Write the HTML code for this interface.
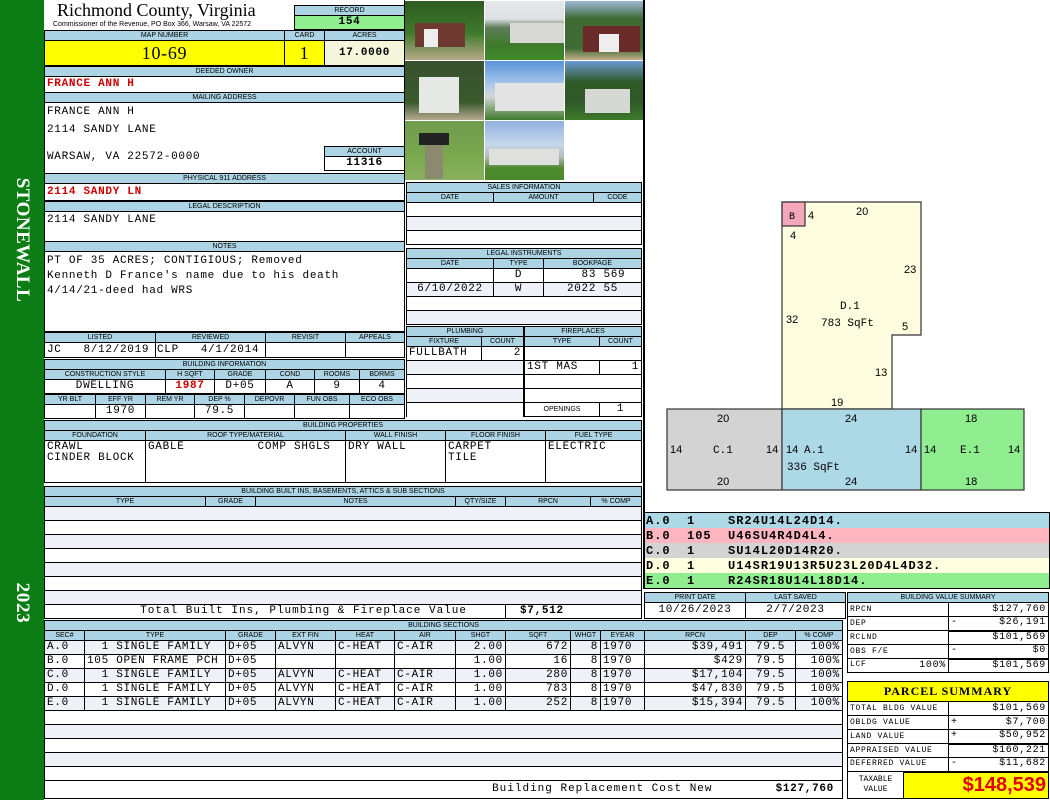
<!DOCTYPE html>
<html><head><meta charset="utf-8"><style>
*{margin:0;padding:0;box-sizing:border-box}
body{width:1050px;height:800px;position:relative;background:#fff;overflow:hidden;font-family:"Liberation Mono",monospace;font-size:11px;letter-spacing:0.7px;color:#000}
.a{position:absolute}
table{position:absolute;border-collapse:collapse;table-layout:fixed}
td{border:1px solid #000;padding:0 2px;white-space:nowrap;overflow:hidden;line-height:1}
.h td,td.h{background:#acd4e4;font-family:"Liberation Sans",sans-serif;font-size:7px;letter-spacing:0;text-align:center;height:10px}
.alt td{background:#eef1f7}
.r{text-align:right}.c{text-align:center}
.red{color:#d00000;font-weight:bold}
.ph{position:absolute;overflow:hidden}
</style></head><body>
<div class="a" style="left:0;top:0;width:44px;height:800px;background:#0b7d14"></div>
<div class="a" style="left:22px;top:240px;transform:translate(-50%,-50%) rotate(90deg);color:#fff;font:bold 19px 'Liberation Serif',serif;white-space:nowrap;letter-spacing:0.5px">STONEWALL</div>
<div class="a" style="left:22px;top:603px;transform:translate(-50%,-50%) rotate(90deg);color:#fff;font:bold 19px 'Liberation Serif',serif">2023</div>

<!-- header -->
<div class="a" style="left:57px;top:0px;font:18px 'Liberation Serif',serif;letter-spacing:0">Richmond County, Virginia</div>
<div class="a" style="left:53px;top:21px;font:7px 'Liberation Sans',sans-serif;letter-spacing:0">Commissioner of the Revenue, PO Box 366, Warsaw, VA 22572</div>
<table style="left:294px;top:5px;width:111px"><tr class="h"><td>RECORD</td></tr><tr><td class="c" style="background:#90ee90;height:14px;font-weight:bold">154</td></tr></table>
<table style="left:44px;top:30px;width:361px"><col style="width:240px"><col style="width:40px"><col>
<tr class="h"><td>MAP NUMBER</td><td>CARD</td><td>ACRES</td></tr>
<tr style="height:25px"><td class="c" style="background:#ff0;font:18px 'Liberation Serif',serif">10-69</td><td class="c" style="background:#ff0;font:18px 'Liberation Serif',serif">1</td><td class="c" style="background:#f5f5dc;font-weight:bold">17.0000</td></tr></table>
<table style="left:44px;top:66px;width:361px"><tr class="h"><td>DEEDED OWNER</td></tr><tr><td class="red" style="height:16px">FRANCE ANN H</td></tr>
<tr class="h"><td>MAILING ADDRESS</td></tr><tr><td style="height:71px;vertical-align:top;position:relative"><div class="a" style="left:2px;top:4px">FRANCE ANN H</div><div class="a" style="left:2px;top:22px">2114 SANDY LANE</div><div class="a" style="left:2px;top:49px">WARSAW, VA 22572-0000</div></td></tr>
<tr class="h"><td>PHYSICAL 911 ADDRESS</td></tr><tr><td class="red" style="height:17px">2114 SANDY LN</td></tr></table>
<table style="left:324px;top:146px;width:81px"><tr class="h"><td>ACCOUNT</td></tr><tr><td class="c" style="height:14px;font-weight:bold;background:#fff">11316</td></tr></table>
<table style="left:44px;top:201px;width:361px"><tr class="h"><td>LEGAL DESCRIPTION</td></tr><tr><td style="height:30px;vertical-align:top;padding-top:3px">2114 SANDY LANE</td></tr>
<tr class="h"><td>NOTES</td></tr><tr><td style="height:80px;vertical-align:top;line-height:15px;padding-top:2px">PT OF 35 ACRES; CONTIGIOUS; Removed<br>Kenneth D France's name due to his death<br>4/14/21-deed had WRS</td></tr></table>
<table style="left:44px;top:332px;width:361px"><col style="width:111px"><col style="width:110px"><col style="width:80px"><col>
<tr class="h"><td>LISTED</td><td>REVIEWED</td><td>REVISIT</td><td>APPEALS</td></tr>
<tr style="height:15px"><td>JC&nbsp;&nbsp;&nbsp;8/12/2019</td><td style="padding:0 1px">CLP&nbsp;&nbsp;&nbsp;4/1/2014</td><td></td><td></td></tr></table>
<table style="left:44px;top:359px;width:361px"><col style="width:121px"><col style="width:49px"><col style="width:51px"><col style="width:49px"><col style="width:45px"><col>
<tr class="h"><td colspan="6">BUILDING INFORMATION</td></tr>
<tr class="h"><td>CONSTRUCTION STYLE</td><td>H SQFT</td><td>GRADE</td><td>COND</td><td>ROOMS</td><td>BDRMS</td></tr>
<tr style="height:14px" class="c"><td>DWELLING</td><td class="red">1987</td><td>D+05</td><td>A</td><td>9</td><td>4</td></tr></table>
<table style="left:44px;top:394px;width:361px"><col style="width:51px"><col style="width:50px"><col style="width:49px"><col style="width:50px"><col style="width:50px"><col style="width:55px"><col>
<tr class="h"><td>YR BLT</td><td>EFF YR</td><td>REM YR</td><td>DEP %</td><td>DEPOVR</td><td>FUN OBS</td><td>ECO OBS</td></tr>
<tr style="height:14px" class="c"><td></td><td>1970</td><td></td><td>79.5</td><td></td><td></td><td></td></tr></table>

<table style="left:44px;top:420px;width:598px"><col style="width:101px"><col style="width:200px"><col style="width:100px"><col style="width:100px"><col>
<tr class="h"><td colspan="5">BUILDING PROPERTIES</td></tr>
<tr class="h"><td>FOUNDATION</td><td>ROOF TYPE/MATERIAL</td><td>WALL FINISH</td><td>FLOOR FINISH</td><td>FUEL TYPE</td></tr>
<tr style="height:42px;vertical-align:top;line-height:14px"><td style="padding-top:1px">CRAWL<br>CINDER BLOCK</td><td style="padding-top:1px">GABLE&nbsp;&nbsp;&nbsp;&nbsp;&nbsp;&nbsp;&nbsp;&nbsp;&nbsp;&nbsp;COMP SHGLS</td><td style="padding-top:1px">DRY WALL</td><td style="padding-top:1px">CARPET<br>TILE</td><td style="padding-top:1px">ELECTRIC</td></tr></table>

<table style="left:44px;top:486px;width:598px"><col style="width:161px"><col style="width:50px"><col style="width:200px"><col style="width:50px"><col style="width:85px"><col>
<tr class="h"><td colspan="6">BUILDING BUILT INS, BASEMENTS, ATTICS &amp; SUB SECTIONS</td></tr>
<tr class="h"><td>TYPE</td><td>GRADE</td><td>NOTES</td><td>QTY/SIZE</td><td>RPCN</td><td>% COMP</td></tr>
<tr class="alt" style="height:14px"><td colspan="6"></td></tr><tr style="height:14px"><td colspan="6"></td></tr>
<tr class="alt" style="height:14px"><td colspan="6"></td></tr><tr style="height:14px"><td colspan="6"></td></tr>
<tr class="alt" style="height:14px"><td colspan="6"></td></tr><tr style="height:14px"><td colspan="6"></td></tr>
<tr class="alt" style="height:14px"><td colspan="6"></td></tr>
<tr style="height:14px"><td colspan="4" class="r" style="padding-right:38px;letter-spacing:1px">Total Built Ins, Plumbing &amp; Fireplace Value</td><td colspan="2" style="font-weight:bold;padding-left:14px">$7,512</td></tr></table>

<table style="left:44px;top:620px;width:799px"><col style="width:40px"><col style="width:141px"><col style="width:50px"><col style="width:60px"><col style="width:59px"><col style="width:61px"><col style="width:50px"><col style="width:65px"><col style="width:30px"><col style="width:44px"><col style="width:101px"><col style="width:50px"><col>
<tr class="h"><td colspan="13">BUILDING SECTIONS</td></tr>
<tr class="h"><td>SEC#</td><td>TYPE</td><td>GRADE</td><td>EXT FIN</td><td>HEAT</td><td>AIR</td><td>SHGT</td><td>SQFT</td><td>WHGT</td><td>EYEAR</td><td>RPCN</td><td>DEP</td><td>% COMP</td></tr>
<tr style="height:14px" class="alt"><td>A.0</td><td>&nbsp;&nbsp;1 SINGLE FAMILY</td><td>D+05</td><td>ALVYN</td><td>C-HEAT</td><td>C-AIR</td><td class="r">2.00</td><td class="r">672</td><td class="r">8</td><td>1970</td><td class="r">$39,491</td><td class="c">79.5</td><td class="r">100%</td></tr>
<tr style="height:14px"><td>B.0</td><td>105 OPEN FRAME PCH</td><td>D+05</td><td></td><td></td><td></td><td class="r">1.00</td><td class="r">16</td><td class="r">8</td><td>1970</td><td class="r">$429</td><td class="c">79.5</td><td class="r">100%</td></tr>
<tr style="height:14px" class="alt"><td>C.0</td><td>&nbsp;&nbsp;1 SINGLE FAMILY</td><td>D+05</td><td>ALVYN</td><td>C-HEAT</td><td>C-AIR</td><td class="r">1.00</td><td class="r">280</td><td class="r">8</td><td>1970</td><td class="r">$17,104</td><td class="c">79.5</td><td class="r">100%</td></tr>
<tr style="height:14px"><td>D.0</td><td>&nbsp;&nbsp;1 SINGLE FAMILY</td><td>D+05</td><td>ALVYN</td><td>C-HEAT</td><td>C-AIR</td><td class="r">1.00</td><td class="r">783</td><td class="r">8</td><td>1970</td><td class="r">$47,830</td><td class="c">79.5</td><td class="r">100%</td></tr>
<tr style="height:14px" class="alt"><td>E.0</td><td>&nbsp;&nbsp;1 SINGLE FAMILY</td><td>D+05</td><td>ALVYN</td><td>C-HEAT</td><td>C-AIR</td><td class="r">1.00</td><td class="r">252</td><td class="r">8</td><td>1970</td><td class="r">$15,394</td><td class="c">79.5</td><td class="r">100%</td></tr>
<tr style="height:14px"><td colspan="13"></td></tr><tr style="height:14px" class="alt"><td colspan="13"></td></tr>
<tr style="height:14px"><td colspan="13"></td></tr><tr style="height:14px" class="alt"><td colspan="13"></td></tr>
<tr style="height:14px"><td colspan="13"></td></tr>
<tr style="height:18px"><td colspan="11" class="r" style="padding-right:33px;letter-spacing:1px;border-right:0">Building Replacement Cost New</td><td colspan="2" class="r" style="font-weight:bold;padding-right:8px;border-left:0">$127,760</td></tr></table>

<!-- photos -->
<div class="ph" style="left:405px;top:1px;width:79px;height:59px;background:linear-gradient(#2d5a22 0,#3f7a2c 55%,#b8a988 100%)"><div class="a" style="left:10px;top:22px;width:50px;height:24px;background:#6e3a30"></div><div class="a" style="left:19px;top:28px;width:14px;height:18px;background:#eee"></div></div>
<div class="ph" style="left:485px;top:1px;width:79px;height:59px;background:linear-gradient(#e4e6ea 0,#dfe2e4 30%,#5f7d5a 45%,#3e7a2a 75%,#3f8a2a 100%)"><div class="a" style="left:25px;top:22px;width:54px;height:20px;background:#d8d8d4"></div></div>
<div class="ph" style="left:565px;top:1px;width:79px;height:59px;background:linear-gradient(#9fb9d8 0,#3f6a34 30%,#3f6a34 80%,#c2b08a 100%)"><div class="a" style="left:18px;top:25px;width:57px;height:26px;background:#6a2a2a"></div><div class="a" style="left:34px;top:33px;width:20px;height:18px;background:#eee"></div></div>
<div class="ph" style="left:405px;top:61px;width:79px;height:59px;background:linear-gradient(#38502e 0,#3a5a2e 70%,#b5a98f 100%)"><div class="a" style="left:14px;top:16px;width:40px;height:36px;background:#e6e8e6"></div></div>
<div class="ph" style="left:485px;top:61px;width:79px;height:59px;background:linear-gradient(#5a94d8 0,#a9c8ec 40%,#d4d6d6 60%,#3c7a2a 100%)"><div class="a" style="left:10px;top:22px;width:69px;height:28px;background:#e4e4e4"></div></div>
<div class="ph" style="left:565px;top:61px;width:79px;height:59px;background:linear-gradient(#6b9ad4 0,#2f5a28 35%,#2f5a28 70%,#3f7a2a 100%)"><div class="a" style="left:20px;top:28px;width:45px;height:24px;background:#d6d8d6"></div></div>
<div class="ph" style="left:405px;top:121px;width:79px;height:59px;background:linear-gradient(#6f9b4e 0,#7aa84f 60%,#8ab060 100%)"><div class="a" style="left:14px;top:12px;width:30px;height:12px;background:#222"></div><div class="a" style="left:20px;top:24px;width:18px;height:34px;background:#8c8a6e"></div></div>
<div class="ph" style="left:485px;top:121px;width:79px;height:59px;background:linear-gradient(#8fb2de 0,#c8d6ea 40%,#b8bcbe 60%,#4f8a2e 80%,#4a8a2a 100%)"><div class="a" style="left:4px;top:28px;width:70px;height:16px;background:#e0e0de"></div></div>
<div class="a" style="left:643px;top:0;width:2px;height:512px;background:#000"></div>
<div class="a" style="left:404px;top:0;width:1px;height:182px;background:#000"></div>

<table style="left:406px;top:182px;width:236px"><col style="width:87px"><col style="width:100px"><col>
<tr class="h"><td colspan="3">SALES INFORMATION</td></tr><tr class="h"><td>DATE</td><td>AMOUNT</td><td>CODE</td></tr>
<tr style="height:14px"><td colspan="3"></td></tr><tr style="height:14px" class="alt"><td colspan="3"></td></tr><tr style="height:14px"><td colspan="3"></td></tr></table>
<table style="left:406px;top:248px;width:236px"><col style="width:87px"><col style="width:50px"><col>
<tr class="h"><td colspan="3">LEGAL INSTRUMENTS</td></tr><tr class="h"><td>DATE</td><td>TYPE</td><td>BOOKPAGE</td></tr>
<tr style="height:14px" class="c"><td></td><td>D</td><td>&nbsp;&nbsp;&nbsp;83 569</td></tr>
<tr style="height:14px" class="c alt"><td>6/10/2022</td><td>W</td><td>2022 55</td></tr>
<tr style="height:14px"><td colspan="3"></td></tr><tr style="height:14px" class="alt"><td colspan="3"></td></tr></table>
<table style="left:406px;top:326px;width:118px"><col style="width:75px"><col>
<tr class="h"><td colspan="2">PLUMBING</td></tr><tr class="h"><td>FIXTURE</td><td>COUNT</td></tr>
<tr style="height:14px"><td>FULLBATH</td><td class="r">2</td></tr><tr style="height:14px" class="alt"><td colspan="2"></td></tr><tr style="height:14px"><td colspan="2"></td></tr><tr style="height:14px" class="alt"><td colspan="2"></td></tr><tr style="height:14px"><td colspan="2" style="border-bottom:0"></td></tr></table>
<table style="left:524px;top:326px;width:118px"><col style="width:75px"><col>
<tr class="h"><td colspan="2">FIREPLACES</td></tr><tr class="h"><td>TYPE</td><td>COUNT</td></tr>
<tr style="height:14px"><td colspan="2"></td></tr><tr style="height:14px"><td>1ST MAS</td><td class="r">1</td></tr><tr style="height:14px"><td colspan="2"></td></tr><tr style="height:14px"><td colspan="2"></td></tr>
<tr style="height:14px"><td style="font:7px 'Liberation Sans',sans-serif;text-align:center;letter-spacing:0">OPENINGS</td><td class="c">1</td></tr></table>

<!-- sketch -->
<svg class="a" style="left:0;top:0;letter-spacing:0" width="1050" height="520">
<g stroke="#333" stroke-width="1.2">
<polygon points="782,202 921,202 921,335 892,335 892,409 782,409" fill="#fffde0"/>
<rect x="782" y="202" width="23" height="24" fill="#f4a7b9"/>
<rect x="667" y="409" width="115" height="81" fill="#d3d3d3"/>
<rect x="782" y="409" width="139" height="81" fill="#add8e6"/>
<rect x="921" y="409" width="103" height="81" fill="#90ee90"/>
</g>
<g font-family="Liberation Sans,sans-serif" font-size="11" fill="#000">
<text x="789" y="219" font-family="Liberation Mono,monospace" font-size="10">B</text>
<text x="808" y="219">4</text><text x="856" y="215">20</text><text x="790" y="239">4</text>
<text x="904" y="273">23</text><text x="786" y="323">32</text><text x="902" y="330">5</text>
<text x="875" y="376">13</text><text x="831" y="406">19</text>
<text x="717" y="422">20</text><text x="845" y="422">24</text><text x="965" y="422">18</text>
<text x="670" y="453">14</text><text x="766" y="453">14</text><text x="786" y="453">14</text><text x="905" y="453">14</text><text x="924" y="453">14</text><text x="1008" y="453">14</text>
<text x="717" y="485">20</text><text x="845" y="485">24</text><text x="965" y="485">18</text>
</g>
<g font-family="Liberation Mono,monospace" font-size="11">
<text x="840" y="309">D.1</text><text x="821" y="326">783 SqFt</text>
<text x="713" y="453">C.1</text><text x="804" y="453">A.1</text><text x="787" y="470">336 SqFt</text><text x="960" y="453">E.1</text>
</g></svg>

<table style="left:644px;top:513px;width:405px;font-weight:bold;font-size:12px;letter-spacing:1px">
<tr style="height:15px;background:#add8e6"><td style="border:0;padding-left:2px">A.0&nbsp;&nbsp;1&nbsp;&nbsp;&nbsp;&nbsp;SR24U14L24D14.</td></tr>
<tr style="height:15px;background:#ffb6c1"><td style="border:0;padding-left:2px">B.0&nbsp;&nbsp;105&nbsp;&nbsp;U46SU4R4D4L4.</td></tr>
<tr style="height:15px;background:#d3d3d3"><td style="border:0;padding-left:2px">C.0&nbsp;&nbsp;1&nbsp;&nbsp;&nbsp;&nbsp;SU14L20D14R20.</td></tr>
<tr style="height:15px;background:#ffffe0"><td style="border:0;padding-left:2px">D.0&nbsp;&nbsp;1&nbsp;&nbsp;&nbsp;&nbsp;U14SR19U13R5U23L20D4L4D32.</td></tr>
<tr style="height:15px;background:#90ee90"><td style="border:0;padding-left:2px">E.0&nbsp;&nbsp;1&nbsp;&nbsp;&nbsp;&nbsp;R24SR18U14L18D14.</td></tr></table>
<div class="a" style="left:643px;top:512px;width:407px;height:77px;border:1px solid #000;border-left:2px solid #000"></div>

<table style="left:644px;top:592px;width:202px"><col style="width:101px"><col>
<tr class="h"><td>PRINT DATE</td><td>LAST SAVED</td></tr><tr style="height:16px" class="c"><td>10/26/2023</td><td>2/7/2023</td></tr></table>

<table style="left:847px;top:592px;width:202px;font-size:10px"><col style="width:101px"><col>
<tr class="h"><td colspan="2">BUILDING VALUE SUMMARY</td></tr>
<tr style="height:14px"><td style="font-size:8px">RPCN</td><td class="r">$127,760</td></tr>
<tr style="height:14px"><td style="font-size:8px">DEP</td><td><span style="float:left">-</span><span style="float:right">$26,191</span></td></tr>
<tr style="height:14px"><td style="font-size:8px">RCLND</td><td class="r" style="border-top:2px solid #000">$101,569</td></tr>
<tr style="height:14px"><td style="font-size:8px">OBS F/E</td><td><span style="float:left">-</span><span style="float:right">$0</span></td></tr>
<tr style="height:14px"><td style="font-size:8px">LCF<span style="float:right;font-size:10px">100%</span></td><td class="r" style="border-top:2px solid #000">$101,569</td></tr></table>

<table style="left:847px;top:681px;width:202px;font-size:10px"><col style="width:56px"><col style="width:45px"><col>
<tr style="height:20px;background:#ff0"><td colspan="3" class="c" style="font:bold 12px 'Liberation Serif',serif;border-bottom:1px solid #000;letter-spacing:1px">PARCEL SUMMARY</td></tr>
<tr style="height:14px"><td colspan="2" style="font-size:8px">TOTAL BLDG VALUE</td><td class="r">$101,569</td></tr>
<tr style="height:14px"><td colspan="2" style="font-size:8px">OBLDG VALUE</td><td><span style="float:left">+</span><span style="float:right">$7,700</span></td></tr>
<tr style="height:14px"><td colspan="2" style="font-size:8px">LAND VALUE</td><td><span style="float:left">+</span><span style="float:right">$50,952</span></td></tr>
<tr style="height:14px"><td colspan="2" style="font-size:8px">APPRAISED VALUE</td><td class="r" style="border-top:2px solid #000">$160,221</td></tr>
<tr style="height:14px"><td colspan="2" style="font-size:8px">DEFERRED VALUE</td><td><span style="float:left">-</span><span style="float:right">$11,682</span></td></tr>
<tr style="height:27px"><td class="c" style="font-size:8px;line-height:10px;letter-spacing:0">TAXABLE<br>VALUE</td><td colspan="2" class="r" style="background:#ff0;border-top:2px solid #000;color:#e00000;font:bold 20px 'Liberation Sans',sans-serif;letter-spacing:0">$148,539</td></tr></table>
</body></html>
